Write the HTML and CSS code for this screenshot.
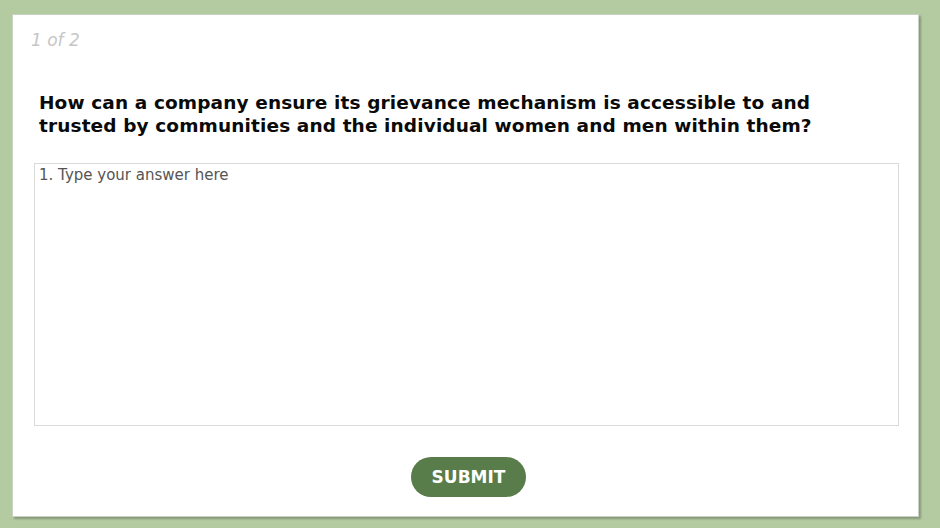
FILE: index.html
```html
<!DOCTYPE html>
<html>
<head>
<meta charset="utf-8">
<link rel="stylesheet" href="styles.css">
</head>
<body>
<div class="card">
  <div class="counter">1 of 2</div>
  <h1 class="question">How can a company ensure its grievance mechanism is accessible to and trusted by communities and the individual women and men within them?</h1>
  <textarea class="answer" placeholder="1. Type your answer here"></textarea>
  <div class="actions"><button class="submit">SUBMIT</button></div>
</div>
</body>
</html>
```
FILE: styles.css
```css
html, body { margin: 0; padding: 0; }
body {
  width: 940px; height: 528px;
  background: #b4cba2;
  padding: 14px 0 0 12px;
  box-sizing: border-box;
  font-family: "DejaVu Sans", sans-serif;
}
.card {
  width: 907px; height: 503px;
  background: #fff;
  border: 1px solid #c9d2c2;
  box-sizing: border-box;
  box-shadow: 2px 2px 2px rgba(0,0,0,0.25);
  padding: 14px 21px 0 21px;
  display: flex; flex-direction: column;
}
.counter {
  font-style: italic;
  color: #c6c6c6;
  font-size: 17px;
  font-weight: 300;
  line-height: 22px;
  margin-left: -3px;
}
.question {
  margin: 40px 0 0 5px;
  max-width: 800px;
  font-size: 18.5px;
  font-weight: bold;
  line-height: 23px;
  color: #0a0a0a;
  letter-spacing: 0.12px;
}
.answer {
  margin-top: 26px;
  width: 865px; height: 263px;
  box-sizing: border-box;
  border: 1px solid #dadada;
  resize: none;
  padding: 1px 4px;
  font-family: "DejaVu Sans", sans-serif;
  font-size: 15px;
  line-height: 20px;
}
.answer::placeholder { color: #555; opacity: 1; }
.actions { display: flex; justify-content: center; margin-top: 31px; padding-left: 6px; }
.submit {
  width: 115px; height: 40px;
  border: none; border-radius: 20px;
  background: #587c4a; color: #fff;
  font-family: "DejaVu Sans", sans-serif;
  font-weight: bold; font-size: 17px;
  letter-spacing: 0;
  padding: 0;
}
```
